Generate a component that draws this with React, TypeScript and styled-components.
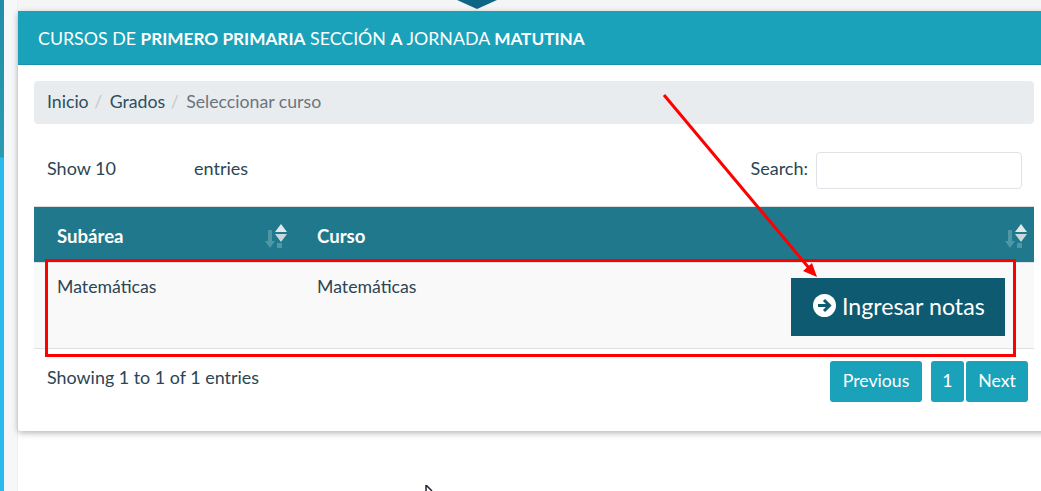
import React from 'react'
import styled, { createGlobalStyle } from 'styled-components'

const GlobalStyle = createGlobalStyle`
  html, body {
    margin: 0;
    padding: 0;
    background: #fff;
  }
  * {
    box-sizing: border-box;
  }
`

const Page = styled.div`
  position: relative;
  width: 1041px;
  height: 491px;
  overflow: hidden;
  display: flex;
  font-family: 'Lato', 'Open Sans', sans-serif;
  font-size: 17.7px;
  color: #2b4554;
  background: #fff;
`

const Sidebar = styled.div`
  width: 4px;
  flex: none;
  background: linear-gradient(#1f8ea6 0, #2a9bb2 157px, #2bb9ee 158px);
`

const Gutter = styled.div`
  width: 14px;
  flex: none;
  background: #f6f7f9;
  border-right: 1px solid #eef0f3;
`

const Main = styled.div`
  flex: 1;
  min-width: 0;
  display: flex;
  flex-direction: column;
`

const TopBar = styled.div`
  height: 11px;
  flex: none;
  background: #f5f5f5;
  display: flex;
  justify-content: center;
  padding-right: 105px;
`

const Notch = styled.div`
  width: 0;
  height: 0;
  border-left: 20px solid transparent;
  border-right: 20px solid transparent;
  border-top: 9px solid #0e6585;
`

const Card = styled.section`
  width: 1040px;
  height: 420px;
  flex: none;
  background: #fff;
  border-radius: 3px;
  box-shadow: 0 2px 6px rgba(0, 0, 0, 0.3);
`

const CardHeader = styled.header`
  height: 54px;
  padding-left: 20px;
  display: flex;
  align-items: center;
  background: #19a2b9;
  border-bottom: 1px solid #1594a9;
  color: #fff;
  font-size: 17.8px;
  white-space: pre;
  b {
    font-size: 17.2px;
    font-weight: 700;
  }
`

const CardBody = styled.div`
  width: 1000px;
  margin-left: 16px;
  padding-top: 16px;
`

const Breadcrumb = styled.nav`
  height: 43px;
  padding: 0 0 3px 13px;
  display: flex;
  align-items: center;
  background: #e9ecef;
  border-radius: 4px;
`

const Crumb = styled.span<{ $active?: boolean }>`
  color: ${(p) => (p.$active ? '#6c757d' : '#2b4f60')};
`

const Slash = styled.span`
  padding: 0 7.500px 0 5.500px;
  color: #c3c9ce;
`

const Controls = styled.div`
  height: 82px;
  padding: 28px 12px 0 13px;
  display: flex;
  align-items: flex-start;
  justify-content: space-between;
  font-size: 18px;
`

const Length = styled.div`
  padding-top: 5px;
  display: flex;
  gap: 78px;
`

const SearchLabel = styled.label`
  display: flex;
  align-items: flex-start;
  gap: 8px;
`

const SearchText = styled.span`
  padding-top: 5px;
`

const SearchInput = styled.input`
  width: 206px;
  height: 37px;
  border: 1px solid #dfe3e7;
  border-radius: 4px;
  background: #fff;
`

const HeadRow = styled.div`
  height: 56px;
  display: grid;
  grid-template-columns: 260px 1fr;
  background: #1f788b;
  border-top: 1px solid #d8dcdf;
  color: #fff;
  font-size: 18.6px;
  font-weight: 700;
`

const HeadCell = styled.div`
  padding: 2px 6px 0 23px;
  display: flex;
  align-items: center;
  justify-content: space-between;
`

const BodyRow = styled.div`
  height: 87px;
  display: grid;
  grid-template-columns: 260px 260px 1fr;
  background: #f9f9f9;
  border-top: 1px solid #dee2e6;
  border-bottom: 1px solid #dee2e6;
`

const BodyCell = styled.div`
  padding: 13px 0 0 23px;
`

const ActionCell = styled.div`
  padding: 15px 29px 0 0;
  display: flex;
  justify-content: flex-end;
  align-items: flex-start;
`

const EnterButton = styled.button`
  width: 214px;
  height: 58px;
  padding: 0 0 3px 22px;
  display: flex;
  align-items: center;
  gap: 6px;
  border: none;
  background: #0e5a70;
  color: #fff;
  font-family: inherit;
  font-size: 23.200px;
`

const Footer = styled.div`
  padding: 12px 6px 0 13px;
  display: flex;
  justify-content: space-between;
  align-items: flex-start;
`

const Info = styled.div`
  padding-top: 5px;
  font-size: 17.900px;
`

const Pager = styled.div`
  display: flex;
  gap: 2px;
`

const PageButton = styled.button<{ $width: number; $gapRight?: boolean }>`
  width: ${(p) => p.$width}px;
  height: 41px;
  padding: 0 0 3px;
  margin-right: ${(p) => (p.$gapRight ? '7px' : '0')};
  border: none;
  border-radius: 3px;
  background: #19a2b9;
  color: #fff;
  font-family: inherit;
  font-size: 17.7px;
`

const HighlightBox = styled.div`
  position: absolute;
  left: 45px;
  top: 259px;
  width: 971px;
  height: 98px;
  border: 3px solid #fe0000;
  pointer-events: none;
`

const ArrowLayer = styled.svg`
  position: absolute;
  left: 0;
  top: 0;
  pointer-events: none;
`

const Cursor = styled.svg`
  position: absolute;
  left: 425px;
  top: 485px;
`

// faded "sort descending" arrow next to the brighter up and down carets
const SortIcon = () => (
  <svg width="24" height="26" viewBox="0 0 24 26">
    <path d="M4 7h4v11h3l-5 7-5-7h3z" fill="#4f96a6" />
    <path d="M13 20h5v5h-5z" fill="#4f96a6" />
    <path d="M17 1l6 8H11z" fill="#e3e8ea" />
    <path d="M11 11h12l-6 8z" fill="#c9d8dc" />
  </svg>
)

const ArrowCircleIcon = () => (
  <svg width="23" height="23" viewBox="0 0 23 23">
    <circle cx="11.500" cy="11.500" r="11.500" fill="#fff" />
    <path d="M5 11.500h11M11 6l5.500 5.500L11 17" fill="none" stroke="#0e5a70" strokeWidth="3" />
  </svg>
)

export default function App() {
  return (
    <Page>
      <GlobalStyle />
      <Sidebar />
      <Gutter />
      <Main>
        <TopBar>
          <Notch />
        </TopBar>
        <Card>
          <CardHeader>
            <span>
              CURSOS DE <b>PRIMERO PRIMARIA</b> SECCIÓN <b>A</b> JORNADA <b>MATUTINA</b>
            </span>
          </CardHeader>
          <CardBody>
            <Breadcrumb>
              <Crumb>Inicio</Crumb>
              <Slash>/</Slash>
              <Crumb>Grados</Crumb>
              <Slash>/</Slash>
              <Crumb $active>Seleccionar curso</Crumb>
            </Breadcrumb>
            <Controls>
              <Length>
                <span>Show 10</span>
                <span>entries</span>
              </Length>
              <SearchLabel>
                <SearchText>Search:</SearchText>
                <SearchInput />
              </SearchLabel>
            </Controls>
            <HeadRow>
              <HeadCell>
                Subárea
                <SortIcon />
              </HeadCell>
              <HeadCell>
                Curso
                <SortIcon />
              </HeadCell>
            </HeadRow>
            <BodyRow>
              <BodyCell>Matemáticas</BodyCell>
              <BodyCell>Matemáticas</BodyCell>
              <ActionCell>
                <EnterButton>
                  <ArrowCircleIcon />
                  Ingresar notas
                </EnterButton>
              </ActionCell>
            </BodyRow>
            <Footer>
              <Info>Showing 1 to 1 of 1 entries</Info>
              <Pager>
                <PageButton $width={92} $gapRight>
                  Previous
                </PageButton>
                <PageButton $width={33}>1</PageButton>
                <PageButton $width={62}>Next</PageButton>
              </Pager>
            </Footer>
          </CardBody>
        </Card>
      </Main>
      <HighlightBox />
      <ArrowLayer width="1041" height="491" viewBox="0 0 1041 491">
        <path d="M664 95L809 268" stroke="#fe0000" strokeWidth="3" fill="none" />
        <path d="M817 277l-14-6 9-8z" fill="#fe0000" />
      </ArrowLayer>
      <Cursor width="10" height="8" viewBox="0 0 10 8">
        <path d="M1 0v6M1 0l6 6" stroke="#223" strokeWidth="1.500" fill="none" />
      </Cursor>
    </Page>
  )
}
